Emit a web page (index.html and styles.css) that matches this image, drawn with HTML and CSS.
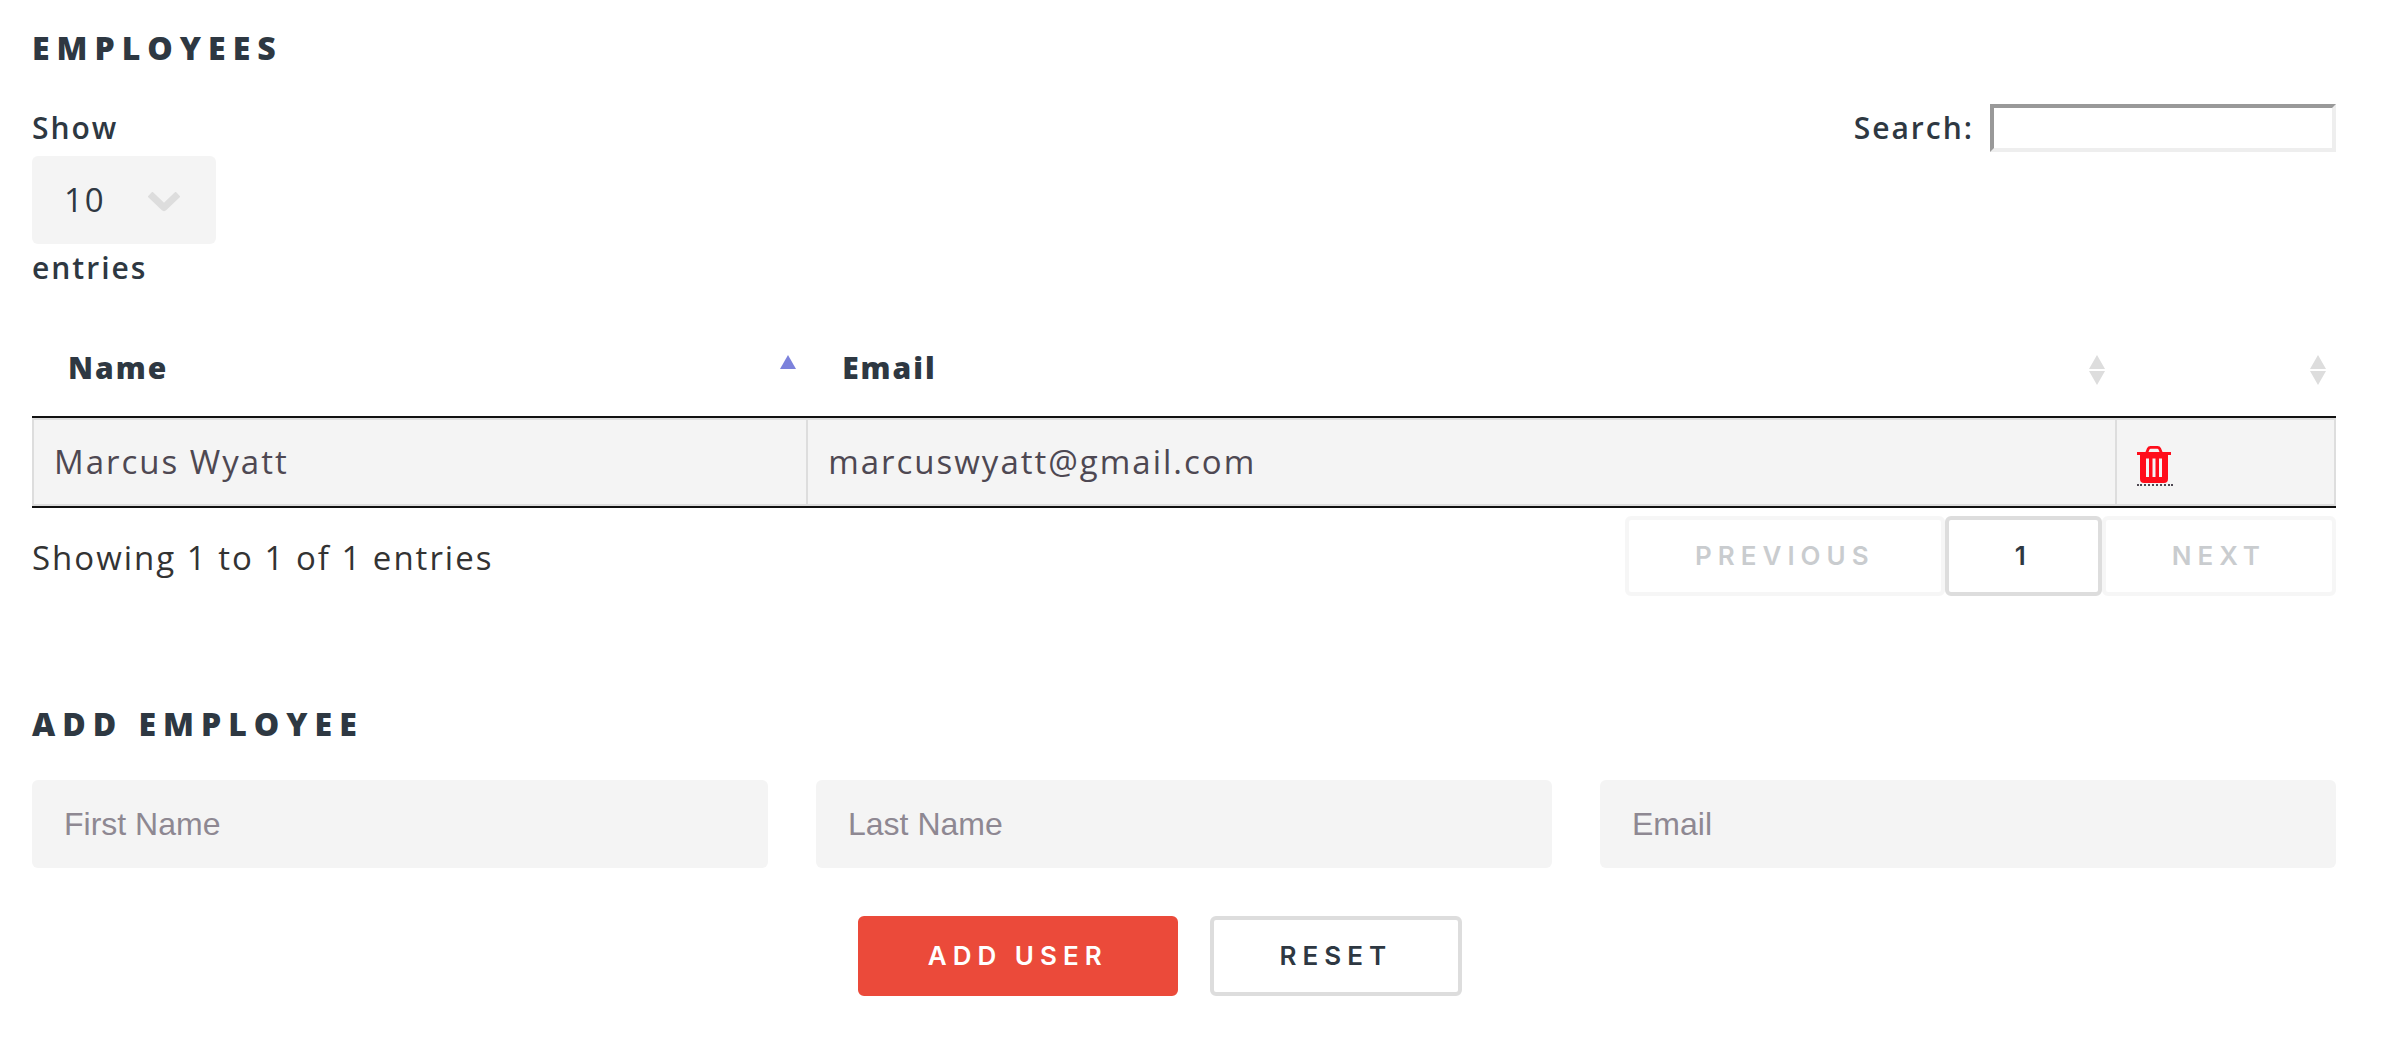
FILE: index.html
```html
<!DOCTYPE html>
<html lang="en">
<head>
<meta charset="utf-8">
<title>Employees</title>
<link rel="stylesheet" href="styles.css">
</head>
<body>
<main class="page">
  <section>
    <h2 class="heading">Employees</h2>
    <div class="table-controls">
      <label class="length">Show
        <span class="select-wrap">
          <select class="select" name="length"><option>10</option><option>25</option><option>50</option></select>
          <svg class="chevron" viewBox="0 0 32 20" aria-hidden="true"><path d="M4.500 4.500 16 15.500 27.500 4.500" fill="none" stroke="#ddd" stroke-width="7" stroke-linecap="square" stroke-linejoin="round"/></svg>
        </span>
        entries
      </label>
      <label class="search">Search: <input class="search-input" type="search"></label>
    </div>
    <table class="table">
      <colgroup><col class="col-name"><col class="col-email"><col class="col-action"></colgroup>
      <thead>
        <tr>
          <th scope="col"><div class="th-inner">Name
            <svg class="sort" viewBox="0 0 16 30" aria-hidden="true"><path d="M8 0 16 14H0Z" fill="#7c82dc"/></svg></div></th>
          <th scope="col"><div class="th-inner">Email
            <svg class="sort" viewBox="0 0 16 30" aria-hidden="true"><path d="M8 0 16 14H0ZM0 16H16L8 30Z" fill="#ddd"/></svg></div></th>
          <th scope="col" aria-label="Actions"><div class="th-inner">
            <svg class="sort" viewBox="0 0 16 30" aria-hidden="true"><path d="M8 0 16 14H0ZM0 16H16L8 30Z" fill="#ddd"/></svg></div></th>
        </tr>
      </thead>
      <tbody>
        <tr>
          <td>Marcus Wyatt</td>
          <td>marcuswyatt@gmail.com</td>
          <td><a class="delete" href="#" aria-label="Delete"><svg class="trash" viewBox="0 0 34 37" aria-hidden="true"><path fill="#ff0d1b" fill-rule="evenodd" d="M0 6H8.500L10 2.200Q11 0 13.500 0H20.500Q23 0 24 2.200L25.500 6H34V9H31V33Q31 37 27 37H7Q3 37 3 33V9H0ZM11.500 6H22.500L21.500 3.500Q21.200 2.800 20.400 2.800H13.600Q12.800 2.800 12.500 3.500ZM9 12.500V31H12V12.500ZM15.500 12.500V31H18.500V12.500ZM22 12.500V31H25V12.500Z"/></svg></a></td>
        </tr>
      </tbody>
    </table>
    <div class="table-footer">
      <p class="info">Showing 1 to 1 of 1 entries</p>
      <nav class="pagination" aria-label="Pages">
        <button class="button" type="button" disabled>Previous</button>
        <button class="button" type="button">1</button>
        <button class="button" type="button" disabled>Next</button>
      </nav>
    </div>
  </section>
  <section class="add">
    <h2 class="heading">Add Employee</h2>
    <form>
      <div class="fields">
        <input class="field" type="text" placeholder="First Name" aria-label="First Name">
        <input class="field" type="text" placeholder="Last Name" aria-label="Last Name">
        <input class="field" type="email" placeholder="Email" aria-label="Email">
      </div>
      <div class="actions">
        <button class="button primary" type="submit">Add User</button>
        <button class="button" type="reset">Reset</button>
      </div>
    </form>
  </section>
</main>
</body>
</html>
```
FILE: styles.css
```css
* { box-sizing: border-box; }

body {
  margin: 0;
  background: #fff;
  color: #333;
  font: 400 33px/48px "Open Sans", sans-serif;
  letter-spacing: 2px;
}

.page { padding: 24px 54px 56px 32px; }

.heading {
  margin: 0 0 32px;
  color: #2e3842;
  font-size: 32px;
  font-weight: 800;
  letter-spacing: 7px;
  text-transform: uppercase;
}

.table-controls {
  display: flex;
  justify-content: space-between;
  align-items: flex-start;
  margin-bottom: 28px;
  color: #2e3842;
  font-size: 30px;
  font-weight: 600;
}

.length { display: flex; flex-direction: column; align-items: flex-start; }

.select-wrap { position: relative; margin-top: 4px; }

.select {
  display: block;
  width: 184px;
  height: 88px;
  padding: 0 32px;
  border: 0;
  border-radius: 6px;
  appearance: none;
  background: #f4f4f4;
  color: #2e3842;
  font: inherit;
  font-size: 33px;
  font-weight: 400;
  letter-spacing: 2px;
}

.chevron {
  position: absolute;
  right: 36px;
  top: 36px;
  width: 32px;
  height: 20px;
  pointer-events: none;
}

.search { display: flex; gap: 16px; }

.search-input {
  width: 346px;
  height: 48px;
  border: 4px solid;
  border-color: #999 #eee #eee #999;
  border-radius: 0;
  background: #fff;
  font: inherit;
}

.table {
  width: 100%;
  border-collapse: separate;
  border-spacing: 0;
  border-bottom: 2px solid #111;
  table-layout: fixed;
}

.col-name { width: 33.6%; }
.col-email { width: 56.8%; }
.col-action { width: 9.6%; }

.table th {
  padding: 24px 10px 24px 36px;
  border-bottom: 2px solid #111;
  color: #2e3842;
  font-size: 30px;
  font-weight: 800;
  text-align: left;
}

.th-inner { display: flex; justify-content: space-between; align-items: center; min-height: 48px; }

.sort { width: 16px; height: 34px; margin-left: auto; padding-top: 4px; }

.table td {
  height: 88px;
  padding: 18px 20px;
  border: 2px solid #ddd;
  border-right-width: 0;
  background: #f4f4f4;
  color: #4e4852;
}

.table td:last-child { border-right-width: 2px; }

.delete {
  display: block;
  width: 36px;
  height: 40px;
  margin-top: 8px;
  border-bottom: 2px dotted #4e4852;
}

.trash { display: block; width: 34px; height: 37px; }

.table-footer {
  display: flex;
  justify-content: space-between;
  align-items: flex-start;
  padding-top: 8px;
}

.info { margin: 18px 0 0; }

.pagination { display: flex; }

.button {
  height: 80px;
  padding: 0 66px;
  border: 4px solid #ddd;
  border-radius: 6px;
  background: #fff;
  color: #2e3842;
  font: 600 26px/40px Inter, sans-serif;
  letter-spacing: 6px;
  text-transform: uppercase;
}

.button:disabled { opacity: 0.25; }

.primary { border-color: #eb4a3a; background: #eb4a3a; color: #fff; }

.add { margin-top: 104px; }

.fields { display: grid; grid-template-columns: repeat(3, 1fr); gap: 48px; }

.field {
  min-width: 0;
  height: 88px;
  padding: 0 32px;
  border: 0;
  border-radius: 6px;
  background: #f4f4f4;
  color: #4e4852;
  font: 400 32px/48px "Liberation Sans", sans-serif;
}

.field::placeholder { color: #8e8892; opacity: 1; }

.actions {
  display: flex;
  justify-content: center;
  gap: 32px;
  margin-top: 48px;
  padding-right: 48px;
}
```
